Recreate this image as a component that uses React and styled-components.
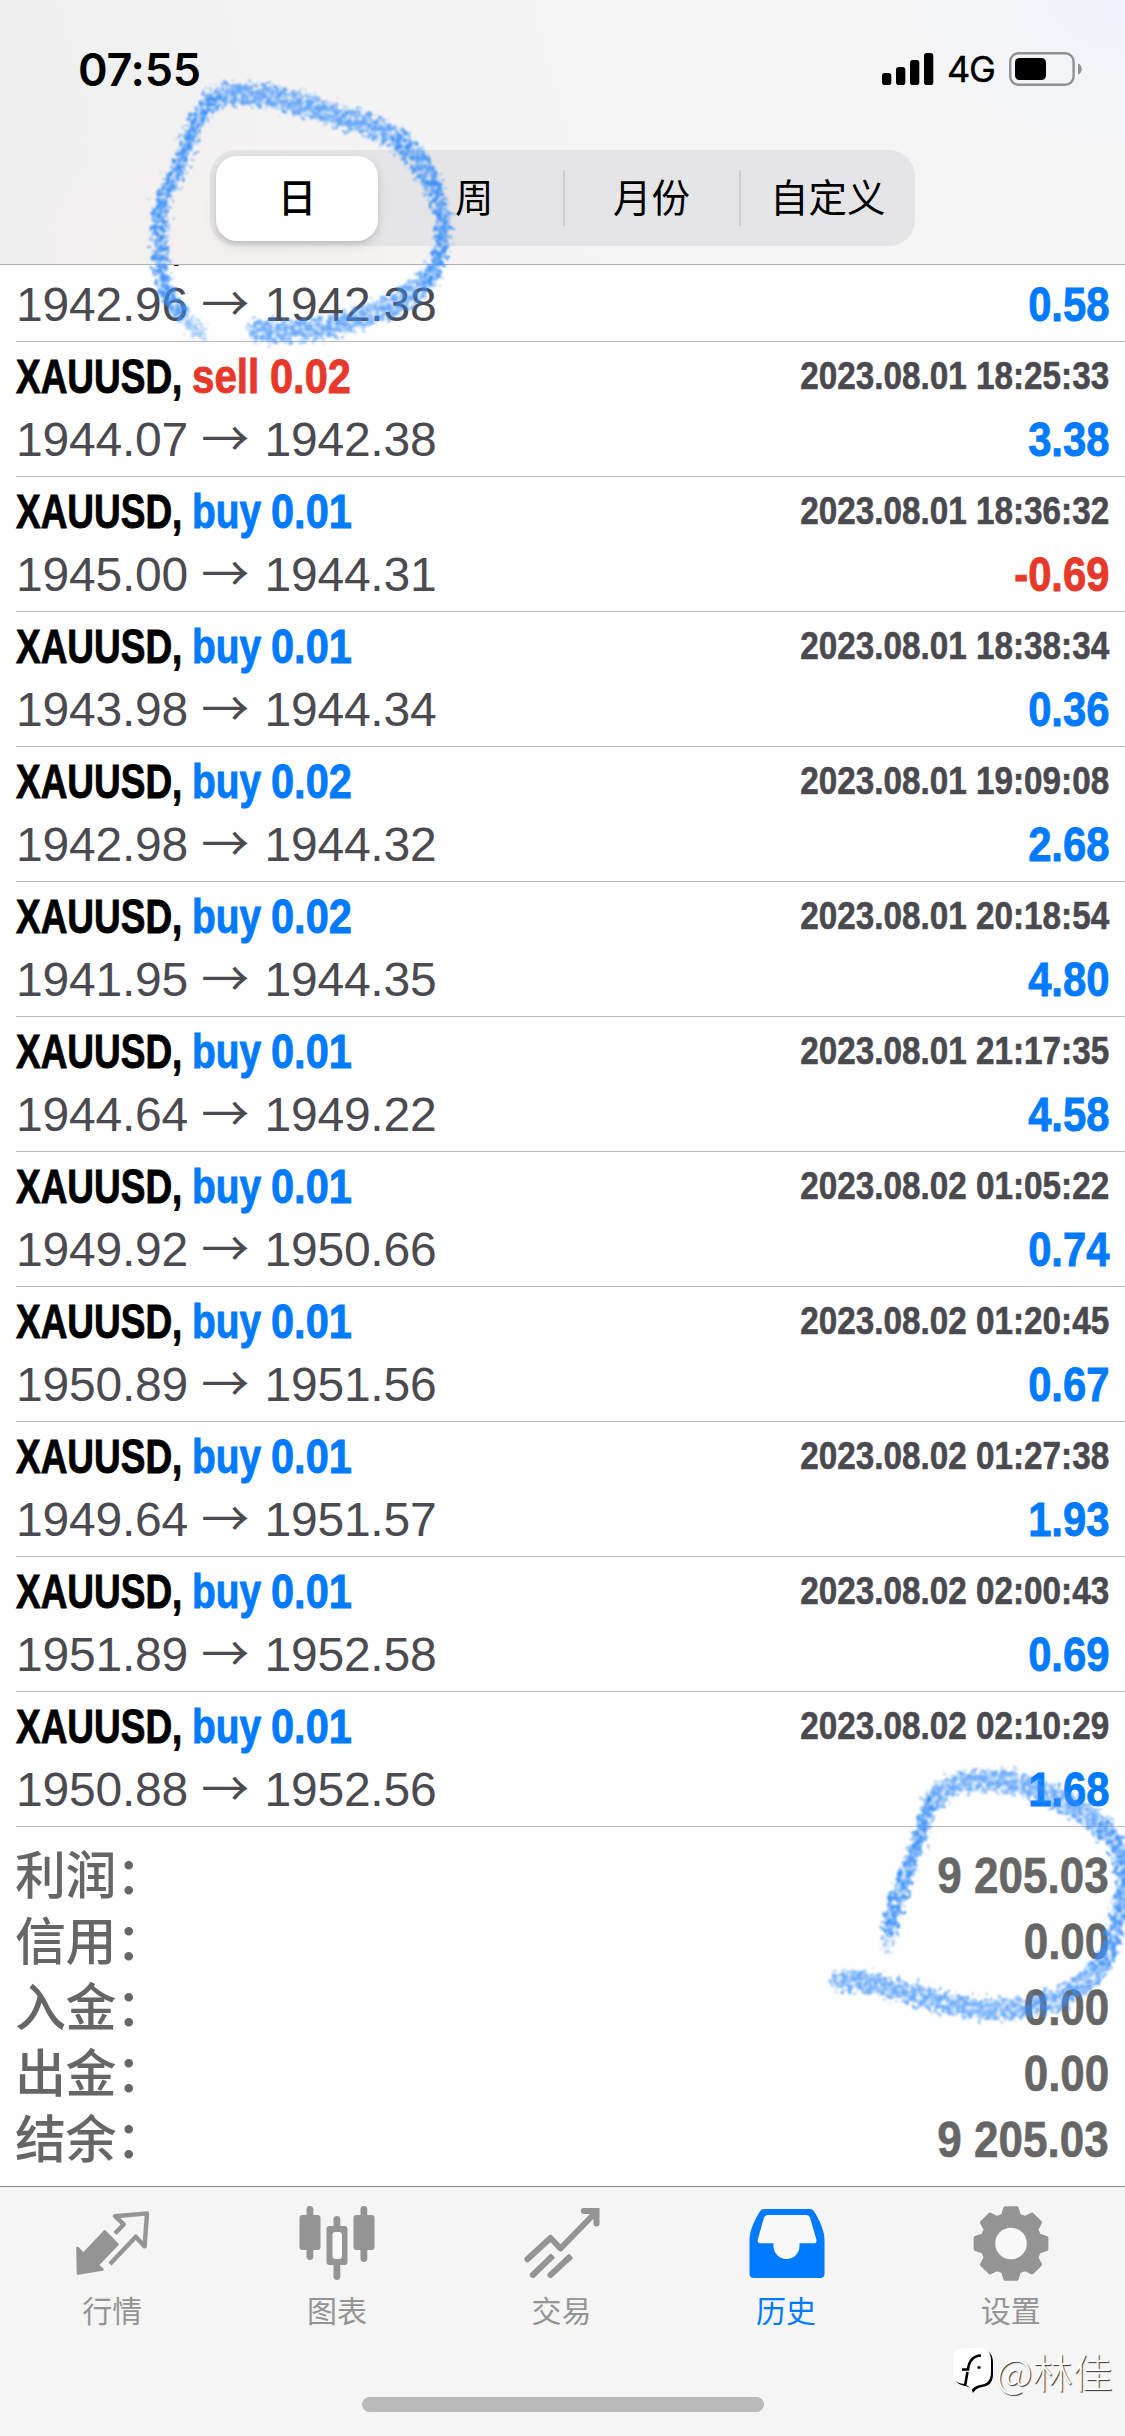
import React from "react";
import styled, { createGlobalStyle } from "styled-components";

const GlobalStyle = createGlobalStyle`
  * {
    box-sizing: border-box;
  }
  body {
    margin: 0;
    background: #fff;
  }
`

const cjk = '"Noto Sans CJK SC", sans-serif';
const latin = '"Liberation Sans", Arial, "Noto Sans CJK SC", sans-serif';

const Screen = styled.div`
  position: relative;
  display: flex;
  flex-direction: column;
  width: 1125px;
  height: 2436px;
  overflow: hidden;
  background: #fefefe;
  font-family: ${latin};
`

const Header = styled.header`
  flex: none;
  height: 265px;
  border-bottom: 1px solid #b0b0b2;
  background:
    radial-gradient(ellipse 260px 180px at 100% 0, #f1f4fb, transparent),
    radial-gradient(ellipse 300px 150px at 22% 95%, #f5f0f0, transparent),
    linear-gradient(75deg, #eeeeee, #f5f4f4 30%, #f5f5f5);
`

const StatusBar = styled.div`
  display: flex;
  align-items: center;
  justify-content: space-between;
  height: 150px;
  padding: 0 43px 12px 78px;
`

const Time = styled.div`
  font-family: Inter, sans-serif;
  font-weight: 600;
  font-size: 45px;
  letter-spacing: -0.3px;
`

const StatusIcons = styled.div`
  display: flex;
  align-items: center;
  gap: 14px;
`

const Network = styled.span`
  width: 47px;
  margin-left: -1px;
  margin-right: 1px;
  font-family: Inter, sans-serif;
  font-size: 36px;
  line-height: 36px;
  letter-spacing: -1.2px;
  white-space: nowrap;
  -webkit-text-stroke: 0.4px currentColor;
`

const Segments = styled.nav`
  display: grid;
  grid-template-columns: repeat(4, 1fr);
  width: 705px;
  height: 96px;
  margin-left: 210px;
  border-radius: 26px;
  background: #e5e5e7;
`

const Segment = styled.div`
  display: flex;
  align-items: center;
  justify-content: center;
  margin: ${({ $active }) => ($active ? "6px 8px 6px 6px" : "20px 0 21px")};
  padding-bottom: ${({ $active }) => ($active ? "8px" : "6px")};
  border-radius: ${({ $active }) => ($active ? "21px" : "0")};
  border-left: ${({ $divided }) => ($divided ? "2px solid #cfcfd2" : "none")};
  background: ${({ $active }) => ($active ? "#fff" : "none")};
  box-shadow: ${({ $active }) => ($active ? "0 4px 12px rgba(0, 0, 0, 0.13), 0 2px 3px rgba(0, 0, 0, 0.08)" : "none")};
  font-family: ${cjk};
  font-size: 38.5px;
  line-height: 50px;
  font-weight: ${({ $active }) => ($active ? 500 : 400)};
`

/* The list is scrolled to its end, so the first deal is cut by the header */
const DealList = styled.main`
  flex: none;
  display: flex;
  flex-direction: column;
  justify-content: flex-end;
  height: 1562px;
  padding-left: 16px;
  overflow: hidden;
`

const Deal = styled.div`
  flex: none;
  height: 135px;
  padding: 3px 16px 0 0;
  border-bottom: 1px solid #bcbcbf;
`

const Line = styled.div`
  display: flex;
  justify-content: space-between;
  height: 63px;
  line-height: 63px;
  font-size: 48px;
  white-space: pre;
`

const Title = styled.div`
  display: flex;
  font-weight: 700;
  -webkit-text-stroke: 0.9px currentColor;
`

const Symbol = styled.span`
  width: 176px;
  transform: scaleX(0.77);
  transform-origin: left;
`

const Side = styled.span`
  width: ${({ $sell }) => ($sell ? "78px" : "79px")};
  color: ${({ $sell }) => ($sell ? "#e7392b" : "#007aff")};
  transform: scaleX(${({ $sell }) => ($sell ? 0.84 : 0.81)});
  transform-origin: left;
`

const Volume = styled(Side)`
  transform: scaleX(0.865);
`

const Stamp = styled.span`
  color: #4a4950;
  font-weight: 700;
  font-size: 39px;
  line-height: 62px;
  transform: scaleX(0.853);
  transform-origin: right;
  -webkit-text-stroke: 0.6px currentColor;
`

const Prices = styled.span`
  color: #4b4a50;
  letter-spacing: -0.2px;
`

const Arrow = styled.span`
  display: inline-block;
  width: 48px;
  height: 48px;
  margin: 0 2px 0 0;
  font-family: ${cjk};
  font-weight: 400;
  line-height: 48px;
`

const Profit = styled.span`
  color: ${({ $loss }) => ($loss ? "#e7392b" : "#007aff")};
  font-weight: 700;
  transform: scaleX(0.87);
  transform-origin: right;
  -webkit-text-stroke: 0.9px currentColor;
`

const Summary = styled.section`
  flex: none;
  height: 359px;
  padding: 15px 16px 0;
`

const SummaryRow = styled.div`
  display: flex;
  justify-content: space-between;
  height: 66px;
  color: #666;
`

const SummaryLabel = styled.span`
  margin-left: -1px;
  font-family: ${cjk};
  font-weight: 500;
  font-size: 51px;
  line-height: 60px;
  letter-spacing: -0.5px;
`

const SummaryValue = styled.span`
  font-weight: 700;
  font-size: 50px;
  line-height: 68px;
  transform: scaleX(0.88);
  transform-origin: right;
  -webkit-text-stroke: 0.6px currentColor;
`

const TabBar = styled.footer`
  flex: 1;
  display: flex;
  flex-direction: column;
  align-items: center;
  justify-content: space-between;
  border-top: 1px solid #8b8b8b;
  padding: 17px 0 24px;
  background: #f5f5f5;
`

const Tabs = styled.nav`
  display: grid;
  grid-template-columns: repeat(5, 1fr);
  width: 100%;
  padding-right: 2px;
`

const Tab = styled.div`
  display: flex;
  flex-direction: column;
  align-items: center;
  gap: 5px;
  color: ${({ $active }) => ($active ? "#007aff" : "#949494")};
  font-family: ${cjk};
  font-size: 30px;
  line-height: 40px;
  font-weight: 400;

  > svg {
    margin-left: 3px;
  }
`

const HomeIndicator = styled.div`
  width: 402px;
  height: 15px;
  border-radius: 8px;
  background: #bababa;
`

const Watermark = styled.div`
  position: absolute;
  left: 953px;
  top: 2341px;
  display: flex;
  align-items: center;
  gap: 3px;
  color: #fff;
  font-family: ${cjk};
  font-size: 40px;
  font-weight: 300;
  line-height: 60px;
  text-shadow: 1px 1px 1px #333;
`

const Crayon = styled.svg`
  position: absolute;
  left: 2px;
  top: 1px;
  pointer-events: none;
`

const periods = ["日", "周", "月份", "自定义"];

const deals = [
  { side: "sell", volume: "0.01", time: "2023.08.01 18:25:31", open: "1942.96", close: "1942.38", profit: "0.58" },
  { side: "sell", volume: "0.02", time: "2023.08.01 18:25:33", open: "1944.07", close: "1942.38", profit: "3.38" },
  { side: "buy", volume: "0.01", time: "2023.08.01 18:36:32", open: "1945.00", close: "1944.31", profit: "-0.69" },
  { side: "buy", volume: "0.01", time: "2023.08.01 18:38:34", open: "1943.98", close: "1944.34", profit: "0.36" },
  { side: "buy", volume: "0.02", time: "2023.08.01 19:09:08", open: "1942.98", close: "1944.32", profit: "2.68" },
  { side: "buy", volume: "0.02", time: "2023.08.01 20:18:54", open: "1941.95", close: "1944.35", profit: "4.80" },
  { side: "buy", volume: "0.01", time: "2023.08.01 21:17:35", open: "1944.64", close: "1949.22", profit: "4.58" },
  { side: "buy", volume: "0.01", time: "2023.08.02 01:05:22", open: "1949.92", close: "1950.66", profit: "0.74" },
  { side: "buy", volume: "0.01", time: "2023.08.02 01:20:45", open: "1950.89", close: "1951.56", profit: "0.67" },
  { side: "buy", volume: "0.01", time: "2023.08.02 01:27:38", open: "1949.64", close: "1951.57", profit: "1.93" },
  { side: "buy", volume: "0.01", time: "2023.08.02 02:00:43", open: "1951.89", close: "1952.58", profit: "0.69" },
  { side: "buy", volume: "0.01", time: "2023.08.02 02:10:29", open: "1950.88", close: "1952.56", profit: "1.68" },
];

const totals = [
  ["利润：", "9 205.03"],
  ["信用：", "0.00"],
  ["入金：", "0.00"],
  ["出金：", "0.00"],
  ["结余：", "9 205.03"],
];

function SignalIcon() {
  return (
    <svg width="52" height="34" viewBox="0 0 52 34">
      <rect x="0" y="21" width="9.3" height="12" rx="2.8" />
      <rect x="14" y="15" width="9.3" height="18" rx="2.8" />
      <rect x="28" y="8" width="9.3" height="25" rx="2.8" />
      <rect x="42" y="1" width="9.3" height="32" rx="2.8" />
    </svg>
  )
}

function BatteryIcon() {
  return (
    <svg width="73" height="34" viewBox="0 0 73 34">
      <rect x="1.2" y="1.2" width="63.4" height="31.6" rx="8.5" fill="none" stroke="#929294" strokeWidth="2.4" />
      <rect x="6" y="6" width="31" height="22" rx="4.5" />
      <path d="M69 11.5 C74 13 74 21 69 22.5 Z" fill="#929294" />
    </svg>
  )
}

function QuotesIcon() {
  return (
    <svg width="80" height="80" viewBox="0 0 80 80">
      <path
        d="M3.5 44 L9.5 50 L30.8 27.5 L43.5 40.3 L23.5 61 L28.5 65.5 L4 69.5 Z"
        fill="currentColor" stroke="currentColor" strokeWidth="2.6" strokeLinejoin="round"
      />
      <path
        d="M41 29.5 L49.8 20.3 L41 12.2 L73 9.4 L70.6 42.4 L61.8 32.7 L36 60"
        fill="none" stroke="currentColor" strokeWidth="4.4" strokeLinejoin="round"
      />
    </svg>
  )
}

function ChartIcon() {
  return (
    <svg width="80" height="80" viewBox="0 0 80 80" fill="currentColor">
      <rect x="8.5" y="2" width="6.8" height="54" rx="3.4" />
      <rect x="1.5" y="11" width="21" height="35" rx="3" />
      <rect x="62.5" y="2" width="6.8" height="56" rx="3.4" />
      <rect x="55.5" y="11" width="21" height="35" rx="3" />
      <rect x="35.5" y="12" width="6.8" height="64" rx="3.4" />
      <rect x="28.5" y="22" width="21" height="39" rx="3" />
      <rect x="34.5" y="28" width="9.5" height="27" rx="3" fill="#f9f9f9" />
    </svg>
  )
}

function TradeIcon() {
  return (
    <svg width="80" height="80" viewBox="0 0 80 80" fill="none" stroke="currentColor" strokeWidth="6" strokeLinecap="round">
      <path d="M4.4 55.2 L27.5 34 L37.5 44.5 L71.5 9.5" strokeLinejoin="round" />
      <path d="M60.8 7 H73.5 V19.5" />
      <path d="M9.8 71 L27.8 53.6 M27.5 71 L46 53.8" />
      <path d="M25 56.3 L30 51.6 M43 56.5 L48 51.9" strokeLinecap="butt" />
    </svg>
  )
}

function HistoryIcon() {
  return (
    <svg width="80" height="80" viewBox="0 0 80 80">
      <path
        d="M16.5 5 H61.5 Q65 5 66.5 8 C71 16 76.5 26 76.5 36 V69.5 Q76.5 74 72 74 H6 Q1.5 74 1.5 69.5 V36 C1.5 26 7 16 11.5 8 Q13 5 16.5 5 Z"
        fill="#007aff"
      />
      <path
        d="M19.5 11 H58.5 Q61 11 62 13.5 L68.4 35.5 Q69 39.3 66 39.3 H51.5 V42 A13 13 0 0 1 25.5 42 V39.3 H12 Q9 39.3 9.8 35.5 L16 13.5 Q17 11 19.5 11 Z"
        fill="#f9f9f9"
      />
    </svg>
  )
}

function SettingsIcon() {
  const points = [];
  for (let i = 0; i < 8; i++) {
    [[-16, 29], [-9, 35.8], [9, 35.8], [16, 29]].forEach(([shift, r]) => {
      const a = ((i * 45 + shift) * Math.PI) / 180;
      points.push(`${(39 + r * Math.cos(a)).toFixed(2)},${(39.5 + r * Math.sin(a)).toFixed(2)}`);
    });
  }
  return (
    <svg width="80" height="80" viewBox="0 0 80 80">
      <polygon points={points.join(" ")} fill="currentColor" stroke="currentColor" strokeWidth="4" strokeLinejoin="round" />
      <circle cx="39" cy="39.5" r="15.8" fill="#f9f9f9" />
    </svg>
  )
}

const tabs = [
  { label: "行情", Icon: QuotesIcon },
  { label: "图表", Icon: ChartIcon },
  { label: "交易", Icon: TradeIcon },
  { label: "历史", Icon: HistoryIcon, active: true },
  { label: "设置", Icon: SettingsIcon },
];

function WatermarkLogo() {
  const bubble = "M13 0 H27 Q39 0 39 13 V24 Q39 36 28 37 Q22 38 19 43 Q18 38 12 36 Q0 35 0 23 V13 Q0 0 13 0 Z";
  return (
    <svg width="40" height="46" viewBox="0 0 40 46">
      <path d={bubble} fill="#000" transform="translate(1 2)" />
      <path d={bubble} fill="#fff" transform="translate(-1 0)" />
      <path d="M9 21.5 H15 Q16.5 8 28 7.5 M24.5 19.5 H27.5 M14.5 24 L12 38" fill="none" stroke="#000" strokeWidth="2.6" />
    </svg>
  )
}

function CrayonMarks() {
  return (
    <Crayon width="1125" height="2436" viewBox="0 0 1125 2436" fill="none" stroke="#3a8ff8" strokeLinecap="round" strokeLinejoin="round">
      <defs>
        <filter id="crayon" filterUnits="userSpaceOnUse" x="0" y="0" width="1140" height="2436" colorInterpolationFilters="sRGB">
          <feTurbulence type="fractalNoise" baseFrequency="0.2" numOctaves="3" seed="7" result="grain" />
          <feDisplacementMap in="SourceGraphic" in2="grain" scale="20" xChannelSelector="R" yChannelSelector="G" result="rough" />
          <feColorMatrix in="grain" type="matrix" values="0 0 0 0 0  0 0 0 0 0  0 0 0 0 0  0 0 2.4 0 -0.45" result="mask" />
          <feComposite in="rough" in2="mask" operator="in" result="chalk" />
          <feGaussianBlur in="chalk" stdDeviation="0.9" />
        </filter>
      </defs>
      <g filter="url(#crayon)">
        <path strokeWidth="14" opacity="0.5" d="M197 332 Q188 322 180 314" />
        <path strokeWidth="15" opacity="0.95" d="M178 312 C165 298 159 280 159 263 C157 245 157 230 158 213 C160 195 168 183 175 170 C181 155 184 145 189 133 C194 120 200 108 210 101" />
        <path strokeWidth="22" opacity="0.78" d="M210 101 C218 93 232 91 250 93 C268 95 282 98 296 102 C314 107 330 113 347 118 C370 124 385 131 398 141" />
        <path strokeWidth="20" opacity="0.85" d="M398 141 C415 155 424 170 432 187" />
        <path strokeWidth="15" opacity="0.95" d="M432 187 C440 207 442 227 440 240 C439 255 433 268 426 278" />
        <path strokeWidth="21" opacity="0.75" d="M426 278 C408 296 388 309 362 315 C345 322 322 328 300 329 C283 331 268 328 256 330" />
        <path strokeWidth="10" opacity="0.4" d="M885 1946 L886 1936" />
        <path strokeWidth="14" opacity="0.95" d="M887 1932 C890 1912 897 1895 903 1877 C910 1860 913 1850 917 1840 C921 1825 923 1815 929 1804" />
        <path strokeWidth="21" opacity="0.75" d="M930 1802 C940 1787 955 1780 973 1780 C1000 1778 1018 1782 1035 1788 C1062 1799 1085 1812 1103 1829" />
        <path strokeWidth="17" opacity="0.9" d="M1103 1829 C1118 1844 1122 1860 1122 1880 C1120 1910 1114 1935 1100 1962" />
        <path strokeWidth="20" opacity="0.75" d="M1100 1962 C1085 1984 1065 1996 1040 2003 C1015 2010 985 2009 960 2005 C935 2001 910 1992 885 1986 C868 1981 850 1978 838 1980" />
      </g>
    </Crayon>
  )
}

function DealRow({ deal }) {
  const sell = deal.side === "sell";
  return (
    <Deal>
      <Line>
        <Title>
          <Symbol>XAUUSD,</Symbol>
          <Side $sell={sell}>{deal.side}</Side>
          <Volume $sell={sell}>{deal.volume}</Volume>
        </Title>
        <Stamp>{deal.time}</Stamp>
      </Line>
      <Line>
        <Prices>{deal.open} <Arrow>→</Arrow> {deal.close}</Prices>
        <Profit $loss={deal.profit.startsWith("-")}>{deal.profit}</Profit>
      </Line>
    </Deal>
  )
}

function App() {
  return (
    <Screen>
      <GlobalStyle />
      <Header>
        <StatusBar>
          <Time>07:55</Time>
          <StatusIcons>
            <SignalIcon />
            <Network>4G</Network>
            <BatteryIcon />
          </StatusIcons>
        </StatusBar>
        <Segments>
          {periods.map((name, i) => (
            <Segment key={name} $active={i === 0} $divided={i > 1}>{name}</Segment>
          ))}
        </Segments>
      </Header>
      <DealList>
        {deals.map((deal) => <DealRow key={deal.time} deal={deal} />)}
      </DealList>
      <Summary>
        {totals.map(([label, value]) => (
          <SummaryRow key={label}>
            <SummaryLabel>{label}</SummaryLabel>
            <SummaryValue>{value}</SummaryValue>
          </SummaryRow>
        ))}
      </Summary>
      <TabBar>
        <Tabs>
          {tabs.map(({ label, Icon, active }) => (
            <Tab key={label} $active={active}>
              <Icon />
              {label}
            </Tab>
          ))}
        </Tabs>
        <HomeIndicator />
      </TabBar>
      <Watermark>
        <WatermarkLogo />
        @林佳
      </Watermark>
      <CrayonMarks />
    </Screen>
  )
}

export default App
